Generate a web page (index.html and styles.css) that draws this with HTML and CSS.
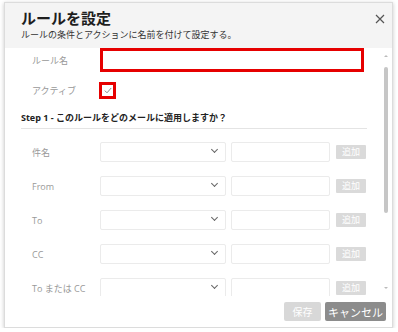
FILE: index.html
```html
<!DOCTYPE html>
<html lang="ja">
<head>
  <meta charset="UTF-8">
  <title>ルールを設定</title>
  <link rel="stylesheet" href="styles.css">
</head>
<body>
  <div class="dialog">
    <div class="dialog-header">
      <div class="header-top">
        <h2>ルールを設定</h2>
        <span class="close">
          <svg width="10" height="10" viewBox="0 0 10 10"><path d="M1 1L9 9M9 1L1 9" stroke="#555" stroke-width="1.2" fill="none"/></svg>
        </span>
      </div>
      <p class="subtitle">ルールの条件とアクションに名前を付けて設定する。</p>
    </div>

    <div class="dialog-body">
      <div class="body-content">
        <div class="form-row name-row">
          <label>ルール名</label>
          <div class="name-input"></div>
        </div>
        <div class="form-row active-row">
          <label>アクティブ</label>
          <span class="check-wrap">
            <svg width="8" height="7" viewBox="0 0 8 7"><path d="M0.8 3.6L3 5.8L7.2 1" stroke="#888" stroke-width="1" fill="none"/></svg>
          </span>
        </div>

        <h3 class="step">Step 1 - このルールをどのメールに適用しますか？</h3>

        <div class="cond-list">
          <div class="cond-row">
            <label>件名</label>
            <div class="select"><span class="chev"></span></div>
            <div class="text"></div>
            <span class="add">追加</span>
          </div>
          <div class="cond-row">
            <label>From</label>
            <div class="select"><span class="chev"></span></div>
            <div class="text"></div>
            <span class="add">追加</span>
          </div>
          <div class="cond-row">
            <label>To</label>
            <div class="select"><span class="chev"></span></div>
            <div class="text"></div>
            <span class="add">追加</span>
          </div>
          <div class="cond-row">
            <label>CC</label>
            <div class="select"><span class="chev"></span></div>
            <div class="text"></div>
            <span class="add">追加</span>
          </div>
          <div class="cond-row">
            <label>To または CC</label>
            <div class="select"><span class="chev"></span></div>
            <div class="text"></div>
            <span class="add">追加</span>
          </div>
        </div>
      </div>

      <div class="scrollbar">
        <span class="arrow up"></span>
        <span class="thumb"></span>
        <span class="arrow down"></span>
      </div>
    </div>

    <div class="dialog-footer">
      <button class="btn save">保存</button>
      <button class="btn cancel">キャンセル</button>
    </div>
  </div>
</body>
</html>
```

FILE: styles.css
```css
body {
  margin: 0;
  padding: 0;
  background-color: #fff;
  font-family: "Open Sans", "Noto Sans CJK JP", sans-serif;
}

.dialog {
  width: 387px;
  height: 324px;
  margin: 2px 0 0 4px;
  border: 1px solid #dcdcdc;
  box-shadow: 0 1px 4px rgba(0, 0, 0, 0.22);
  display: flex;
  flex-direction: column;
  background-color: #fff;
  overflow: hidden;
}

.dialog-header {
  height: 45px;
  box-sizing: border-box;
  padding: 5px 7px 0 16px;
  background-color: #f4f4f4;
  flex-shrink: 0;
}

.header-top {
  display: flex;
  justify-content: space-between;
  align-items: flex-start;
}

h2 {
  margin: 0;
  font-size: 15px;
  line-height: 20px;
  font-weight: bold;
  color: #1e1e1e;
}

.close {
  display: block;
  margin-top: 6px;
  line-height: 0;
}

.subtitle {
  margin: 0;
  font-size: 9px;
  line-height: 13px;
  color: #333;
}

.dialog-body {
  height: 248px;
  display: flex;
  flex-shrink: 0;
}

.body-content {
  flex: 1;
  padding-left: 16px;
  overflow: hidden;
}

.form-row {
  display: flex;
  align-items: center;
}

.form-row label,
.cond-row label {
  width: 67px;
  padding-left: 11px;
  font-size: 9px;
  color: #999;
  flex-shrink: 0;
}

.name-row {
  height: 24px;
}

.name-input {
  width: 258px;
  height: 18px;
  margin-left: 1px;
  border: 3px solid #e60000;
  background-color: #fff;
}

.active-row {
  height: 36px;
}

.check-wrap {
  width: 11px;
  height: 11px;
  margin-left: 0;
  border: 3px solid #e60000;
  display: flex;
  align-items: center;
  justify-content: center;
}

.step {
  margin: 0 13px 0 0;
  height: 20px;
  line-height: 20px;
  font-size: 9px;
  font-weight: bold;
  color: #222;
  border-bottom: 1px solid #e4e4e4;
}

.cond-list {
  margin-top: 13px;
  display: flex;
  flex-direction: column;
  gap: 14px;
}

.cond-row {
  display: flex;
  align-items: center;
  height: 20px;
}

.select {
  width: 124px;
  height: 18px;
  margin-left: 1px;
  border: 1px solid #ebebeb;
  border-radius: 2px;
  position: relative;
}

.chev {
  position: absolute;
  right: 8px;
  top: 4px;
  width: 4px;
  height: 4px;
  border-right: 1px solid #666;
  border-bottom: 1px solid #666;
  transform: rotate(45deg);
}

.text {
  width: 97px;
  height: 18px;
  margin-left: 5px;
  border: 1px solid #ebebeb;
  border-radius: 2px;
}

.add {
  width: 30px;
  height: 14px;
  margin-left: 6px;
  background-color: #dadada;
  border-radius: 1px;
  color: #fff;
  font-size: 9px;
  line-height: 14px;
  text-align: center;
}

.scrollbar {
  width: 12px;
  flex-shrink: 0;
  display: flex;
  flex-direction: column;
  align-items: center;
  padding-top: 7px;
}

.arrow {
  width: 0;
  height: 0;
  border-left: 2px solid transparent;
  border-right: 2px solid transparent;
}

.arrow.up {
  border-bottom: 2px solid #bbb;
}

.arrow.down {
  margin-top: 74px;
  border-top: 2px solid #bbb;
}

.thumb {
  width: 4px;
  height: 146px;
  margin-top: 10px;
  background-color: #c6c6c6;
  border-radius: 2px;
}

.dialog-footer {
  flex: 1;
  display: flex;
  justify-content: flex-end;
  align-items: flex-start;
  gap: 4px;
  padding: 6px 6px 0 0;
}

.btn {
  height: 19px;
  border: none;
  border-radius: 2px;
  color: #fff;
  font-family: "Open Sans", "Noto Sans CJK JP", sans-serif;
  font-size: 10px;
  padding: 0;
  cursor: pointer;
}

.save {
  width: 37px;
  background-color: #d8d8d8;
}

.cancel {
  width: 61px;
  background-color: #8c8c8c;
  font-size: 11px;
}
```
